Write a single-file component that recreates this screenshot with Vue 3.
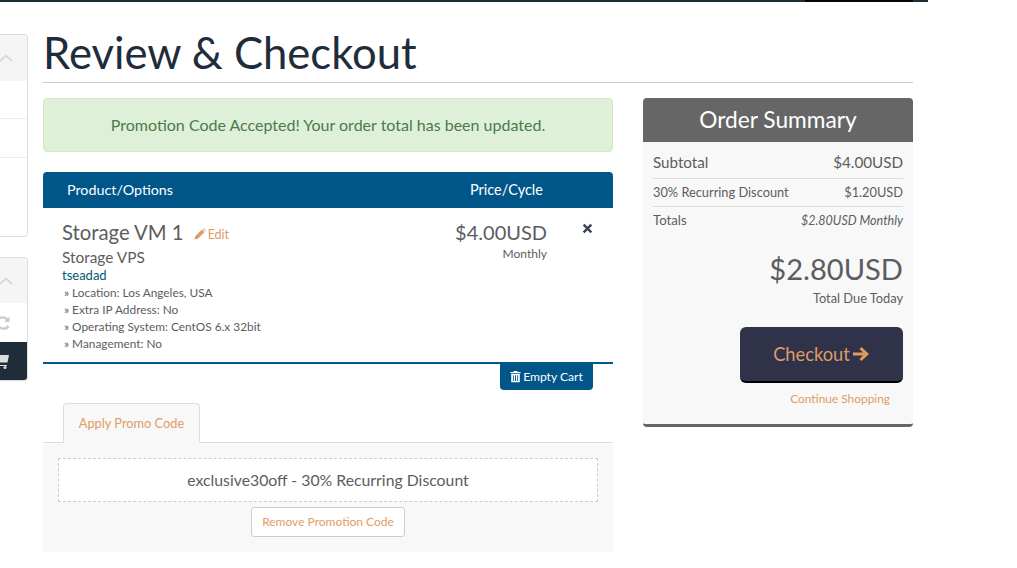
<template>
  <div class="topbar"><span class="topbar-dark"></span></div>
  <div class="page">
    <!-- sidebar stub, cut off by the left edge -->
    <aside class="sidebar">
      <div class="side-panel first">
        <div class="side-head">
          <svg class="chev" viewBox="0 0 14 8"><path d="M1 7 L7 1.5 L13 7" fill="none" stroke="#d8d8d8" stroke-width="2" /></svg>
        </div>
        <div class="side-row"></div>
        <div class="side-row tall"></div>
        <div class="side-row last"></div>
      </div>
      <div class="side-panel second">
        <div class="side-head short">
          <svg class="chev" viewBox="0 0 14 8"><path d="M1 7 L7 1.5 L13 7" fill="none" stroke="#d8d8d8" stroke-width="2" /></svg>
        </div>
        <div class="side-refresh">
          <svg viewBox="0 0 16 16" class="refresh">
            <path d="M13 6 A6 6 0 0 0 2.5 5" fill="none" stroke="#ccc" stroke-width="2.4" />
            <path d="M3 10 A6 6 0 0 0 13.5 11" fill="none" stroke="#ccc" stroke-width="2.4" />
            <path d="M14.5 1.5 V7 H9 Z" fill="#ccc" />
          </svg>
        </div>
        <div class="side-cart">
          <svg viewBox="0 0 18 16" class="cart">
            <path d="M0 2 H16 L14.5 9.5 H2 V12 H14 V13 H0 Z" fill="#ddd" />
            <circle cx="3.5" cy="14.5" r="1.5" fill="#ddd" />
            <circle cx="12" cy="14.5" r="1.5" fill="#ddd" />
          </svg>
        </div>
      </div>
    </aside>

    <main class="main">
      <h1 class="title">Review &amp; Checkout</h1>

      <div class="columns">
        <section class="cart-col">
          <div class="alert">Promotion Code Accepted! Your order total has been updated.</div>

          <div class="cart-head">
            <span class="head-product">Product/Options</span>
            <span class="head-price">Price/Cycle</span>
          </div>

          <div class="item">
            <div class="item-info">
              <div class="item-title">
                <span class="item-name">Storage VM 1</span>
                <a class="edit">
                  <svg viewBox="0 0 12 12" class="pencil"><path d="M0.5 11.5 L1.2 8.2 L8 1.4 L10.6 4 L3.8 10.8 Z M8.8 0.7 L9.6 0.2 L11.8 2.4 L11.3 3.2 Z" fill="#df9c66" /></svg>
                  Edit
                </a>
              </div>
              <div class="item-group">Storage VPS</div>
              <div class="item-domain">tseadad</div>
              <div class="item-opt" v-for="opt in options" :key="opt">» {{ opt }}</div>
            </div>
            <div class="item-price">
              <div class="price">$4.00USD</div>
              <div class="cycle">Monthly</div>
            </div>
            <div class="item-remove">
              <svg viewBox="0 0 10 10" class="times"><path d="M1.5 1.5 L8.5 8.5 M8.5 1.5 L1.5 8.5" stroke="#3a4350" stroke-width="2.2" /></svg>
            </div>
          </div>

          <div class="empty-row">
            <button class="empty-btn">
              <svg viewBox="0 0 12 14" class="trash">
                <path d="M4 1 H8 V2 H11.5 V3.4 H0.5 V2 H4 Z" fill="#fff" />
                <path d="M1.3 4.2 H10.7 V13.2 H1.3 Z M3.2 5.5 V12 H4.1 V5.5 Z M5.5 5.5 V12 H6.5 V5.5 Z M7.9 5.5 V12 H8.8 V5.5 Z" fill="#fff" fill-rule="evenodd" />
              </svg>
              Empty Cart
            </button>
          </div>

          <div class="tabs">
            <span class="tab">Apply Promo Code</span>
          </div>
          <div class="promo">
            <div class="promo-code">exclusive30off - 30% Recurring Discount</div>
            <button class="remove-btn">Remove Promotion Code</button>
          </div>
        </section>

        <section class="summary">
          <h2 class="summary-title">Order Summary</h2>
          <div class="summary-body">
            <div class="sum-row subtotal"><span>Subtotal</span><span>$4.00USD</span></div>
            <div class="sum-row discount"><span>30% Recurring Discount</span><span>$1.20USD</span></div>
            <div class="sum-row totals"><span>Totals</span><em>$2.80USD Monthly</em></div>
            <div class="total-due">
              <div class="due-amount">$2.80USD</div>
              <div class="due-label">Total Due Today</div>
            </div>
            <div class="checkout-wrap">
              <button class="checkout">
                Checkout
                <svg viewBox="0 0 17 14" class="arrow"><path d="M0 5.5 H10 L6.5 2 L8.5 0 L16 7 L8.5 14 L6.5 12 L10 8.5 H0 Z" fill="#e29a5c" /></svg>
              </button>
            </div>
            <a class="continue">Continue Shopping</a>
          </div>
        </section>
      </div>
    </main>
  </div>
</template>

<script setup>
const options = [
  'Location: Los Angeles, USA',
  'Extra IP Address: No',
  'Operating System: CentOS 6.x 32bit',
  'Management: No'
]
</script>

<style>
html, body {
  background: #fff;
  overflow: hidden;
}
</style>

<style scoped>
.topbar {
  width: 928px;
  height: 2px;
  background: #1f2d36;
}
.topbar-dark {
  display: block;
  width: 108px;
  height: 2px;
  margin-left: 805px;
  background: #050505;
}
.page {
  display: flex;
  width: 913px;
  font-family: Lato, "Liberation Sans", sans-serif;
  color: #5c5d60;
}
.sidebar {
  width: 28px;
  flex: none;
  padding-top: 32px;
}
.side-panel {
  border: 1px solid #ddd;
  border-left: none;
  border-radius: 0 4px 4px 0;
  overflow: hidden;
  background: #fff;
  box-sizing: border-box;
}
.side-panel.first {
  height: 203px;
}
.side-panel.second {
  margin-top: 20px;
  height: 124px;
}
.side-head {
  height: 46px;
  background: #f5f5f5;
  display: flex;
  align-items: center;
}
.side-head.short {
  height: 45px;
}
.chev {
  width: 14px;
  height: 8px;
  margin-left: -1px;
}
.side-row {
  height: 38px;
  box-sizing: border-box;
  border-bottom: 1px solid #eee;
}
.side-row.tall {
  height: 39px;
}
.side-row.last {
  border-bottom: none;
}
.side-refresh {
  height: 39px;
  display: flex;
  align-items: center;
}
.refresh {
  width: 16px;
  height: 16px;
  margin-left: -5px;
}
.side-cart {
  height: 38px;
  background: #1f2d3a;
  display: flex;
  align-items: center;
}
.cart {
  width: 18px;
  height: 16px;
  margin-left: -7px;
}
.main {
  flex: 1;
  margin-left: 15px;
}
.title {
  margin: 0;
  height: 81px;
  padding-top: 22px;
  box-sizing: border-box;
  border-bottom: 1px solid #ccc;
  font-size: 43.6px;
  line-height: 56px;
  font-weight: 400;
  color: #1f2d3a;
}
.columns {
  display: flex;
  justify-content: space-between;
  align-items: flex-start;
  margin-top: 15px;
}
.cart-col {
  width: 570px;
}
.alert {
  height: 54px;
  box-sizing: border-box;
  border: 1px solid #d6e9c6;
  border-radius: 4px;
  background: #dff0d8;
  color: #4a7a4b;
  font-size: 16px;
  line-height: 52px;
  text-align: center;
}
.cart-head {
  display: flex;
  align-items: center;
  height: 35px;
  padding-bottom: 1px;
  margin-top: 20px;
  background: #005689;
  border-radius: 4px 4px 0 0;
  color: #fff;
  font-size: 14.3px;
}
.head-product {
  margin-left: 24px;
  width: 403px;
}
.head-price {
  font-size: 14.5px;
}
.item {
  display: flex;
  height: 154px;
  border-bottom: 2px solid #005689;
}
.item-info {
  width: 344px;
  margin-left: 19px;
  padding-top: 10px;
}
.item-title {
  display: flex;
  align-items: baseline;
  height: 28px;
}
.item-name {
  font-size: 20.3px;
  line-height: 28px;
}
.edit {
  margin-left: 10px;
  font-size: 12.5px;
  color: #df9c66;
  display: inline-flex;
  align-items: center;
  gap: 2px;
}
.pencil {
  width: 12px;
  height: 12px;
}
.item-group {
  font-size: 15.4px;
  line-height: 20px;
  margin-top: 1px;
}
.item-domain {
  font-size: 13px;
  line-height: 17px;
  margin: 0;
  color: #005a70;
}
.item-opt {
  font-size: 11.85px;
  line-height: 17px;
  padding-left: 2px;
}
.item-price {
  width: 141px;
  padding-top: 12px;
  text-align: right;
}
.price {
  font-size: 20px;
  line-height: 25px;
}
.cycle {
  font-size: 12px;
  line-height: 16px;
  margin-top: 1px;
}
.item-remove {
  margin-left: 35px;
  padding-top: 15px;
}
.times {
  width: 11px;
  height: 11px;
  display: block;
}
.empty-row {
  display: flex;
  justify-content: flex-end;
  padding-right: 20px;
}
.empty-btn {
  width: 93px;
  height: 26px;
  padding: 0 0 2px;
  border: none;
  border-radius: 0 0 4px 4px;
  background: #005689;
  color: #fff;
  font-family: inherit;
  font-size: 12.1px;
  display: flex;
  align-items: center;
  justify-content: center;
  gap: 2px;
}
.trash {
  width: 11px;
  height: 13px;
}
.tabs {
  margin-top: 13px;
  height: 39px;
  border-bottom: 1px solid #ddd;
  padding-left: 20px;
}
.tab {
  display: block;
  width: 137px;
  height: 40px;
  box-sizing: border-box;
  border: 1px solid #ddd;
  border-bottom: none;
  border-radius: 4px 4px 0 0;
  background: #f8f8f8;
  color: #df9c66;
  font-size: 12.8px;
  line-height: 38px;
  text-align: center;
}
.promo {
  height: 109px;
  box-sizing: border-box;
  padding: 15px 15px 0;
  background: #f8f8f8;
  display: flex;
  flex-direction: column;
  align-items: center;
}
.promo-code {
  width: 100%;
  height: 44px;
  box-sizing: border-box;
  border: 1px dashed #ccc;
  background: #fff;
  font-size: 15.8px;
  line-height: 42px;
  text-align: center;
}
.remove-btn {
  width: 154px;
  height: 30px;
  margin-top: 5px;
  padding: 0 0 2px;
  border: 1px solid #ccc;
  border-radius: 3px;
  background: #fff;
  color: #df9c66;
  font-family: inherit;
  font-size: 12px;
}
.summary {
  width: 270px;
  height: 329px;
  box-sizing: border-box;
  background: #f8f8f8;
  border-bottom: 3px solid #666;
  border-radius: 4px;
}
.summary-title {
  margin: 0;
  height: 44px;
  background: #666;
  border-radius: 4px 4px 0 0;
  color: #fff;
  font-size: 22.7px;
  line-height: 44px;
  font-weight: 400;
  text-align: center;
}
.summary-body {
  padding: 8px 10px 0;
}
.sum-row {
  display: flex;
  justify-content: space-between;
  align-items: center;
  box-sizing: content-box;
}
.subtotal {
  height: 24px;
  padding-bottom: 4px;
  font-size: 15.2px;
  border-bottom: 1px solid #ddd;
}
.discount {
  height: 26px;
  padding-bottom: 1px;
  font-size: 12.8px;
  border-bottom: 1px solid #ddd;
}
.totals {
  height: 26px;
  padding-bottom: 1px;
  font-size: 13.2px;
}
.totals em {
  font-size: 12.5px;
}
.total-due {
  margin-top: 15px;
  text-align: right;
}
.due-amount {
  font-size: 29.1px;
  line-height: 40px;
}
.due-label {
  font-size: 12.8px;
  line-height: 16px;
  margin-top: 1px;
}
.checkout-wrap {
  display: flex;
  justify-content: flex-end;
  margin-top: 21px;
}
.checkout {
  width: 163px;
  height: 56px;
  padding: 0;
  border: none;
  border-bottom: 2px solid #000;
  border-radius: 6px;
  background: #2f3248;
  color: #df9c66;
  font-family: inherit;
  font-size: 18.3px;
  display: flex;
  align-items: center;
  justify-content: center;
  gap: 3px;
}
.arrow {
  width: 17px;
  height: 14px;
}
.continue {
  display: block;
  margin-top: 8px;
  padding-right: 13px;
  text-align: right;
  color: #df9c66;
  font-size: 11.9px;
  line-height: 16px;
}
</style>
